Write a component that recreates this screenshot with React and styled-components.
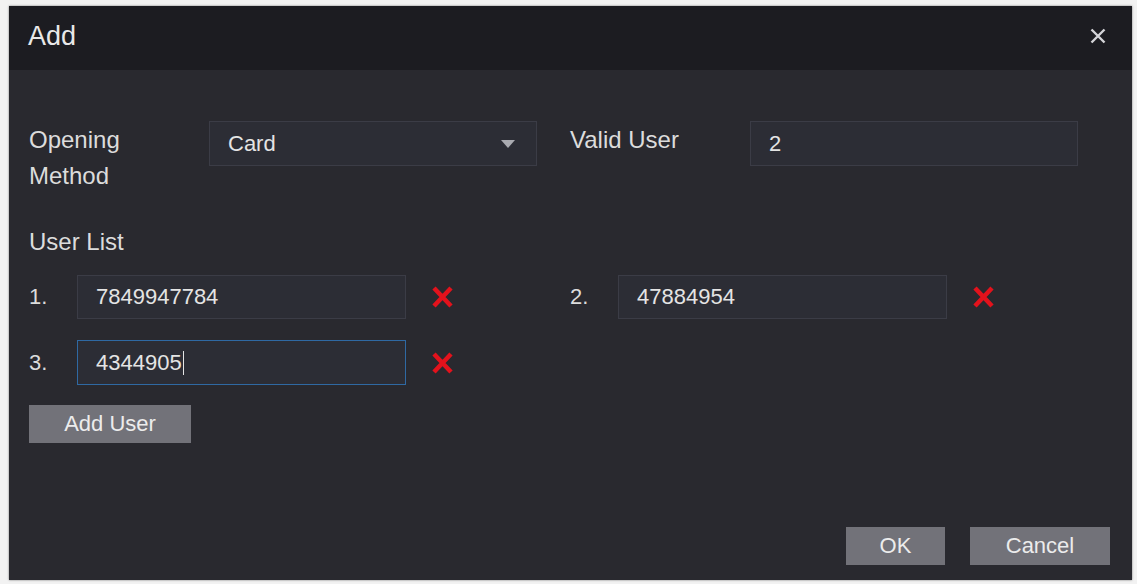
import styled, { createGlobalStyle } from "styled-components";

const GlobalStyle = createGlobalStyle`
  html, body {
    margin: 0;
    padding: 0;
    background: #f2f2f2;
  }
  body {
    font-family: "Liberation Sans", Arial, sans-serif;
  }
  * {
    box-sizing: border-box;
  }
`;

const Page = styled.div`
  width: 1137px;
  height: 584px;
  padding: 6px 5px 4px 9px;
`;

const Dialog = styled.div`
  width: 1123px;
  height: 574px;
  display: flex;
  flex-direction: column;
  background: #29292f;
  color: #dedede;
  box-shadow: 0 0 2px rgba(0, 0, 0, 0.5);
`;

const Header = styled.div`
  height: 64px;
  display: flex;
  align-items: center;
  justify-content: space-between;
  padding: 0 26px 3px 19px;
  background: #1c1c21;
`;

const Title = styled.div`
  font-size: 27px;
  color: #e8e8e8;
`;

const CloseButton = styled.div`
  width: 16px;
  height: 16px;
  margin-top: -2px;
  display: flex;
  cursor: pointer;
`;

const Body = styled.div`
  flex: 1;
  display: flex;
  flex-direction: column;
  padding: 51px 22px 15px 20px;
`;

const FormRow = styled.div`
  display: flex;
  gap: 33px;
`;

const FormGroup = styled.div`
  display: grid;
  grid-template-columns: 180px 328px;
  align-items: start;
`;

const Label = styled.div`
  font-size: 24px;
  line-height: 36px;
  padding-top: 1px;
  color: #dcdcdc;
`;

const Field = styled.div`
  height: ${(props) => (props.tall ? "45px" : "44px")};
  display: flex;
  align-items: center;
  position: relative;
  padding: 0 18px;
  font-size: 22px;
  color: #e4e4e4;
  background: #2c2d35;
  border: 1px solid ${(props) => (props.focused ? "#2f69a3" : "#3b3c46")};
`;

const Arrow = styled.span`
  position: absolute;
  right: 21px;
  top: 50%;
  margin-top: -4px;
  width: 0;
  height: 0;
  border-left: 7px solid transparent;
  border-right: 7px solid transparent;
  border-top: 8px solid #a9aab0;
`;

const Caret = styled.span`
  display: inline-block;
  width: 1px;
  height: 24px;
  margin-left: 1px;
  background: #e4e4e4;
`;

const SectionTitle = styled.div`
  margin-top: 36px;
  font-size: 24px;
  line-height: 24px;
  color: #dcdcdc;
`;

const UserGrid = styled.div`
  margin-top: 21px;
  display: grid;
  grid-template-columns: 541px 541px;
  row-gap: 21px;
`;

const UserCell = styled.div`
  display: flex;
  align-items: center;
`;

const UserIndex = styled.div`
  width: 48px;
  font-size: 22px;
  color: #dcdcdc;
`;

const UserField = styled(Field)`
  width: 329px;
`;

const RemoveButton = styled.div`
  width: 23px;
  height: 24px;
  margin-left: 25px;
  display: flex;
  cursor: pointer;
`;

const GrayButton = styled.div`
  width: ${(props) => props.w}px;
  height: 38px;
  display: flex;
  align-items: center;
  justify-content: center;
  font-size: 22px;
  color: #ececec;
  background: #727279;
  cursor: pointer;
`;

const AddRow = styled.div`
  margin-top: 20px;
  display: flex;
`;

const Footer = styled.div`
  margin-top: auto;
  display: flex;
  justify-content: flex-end;
  gap: 25px;
`;

function RedCross() {
  return (
    <svg width="23" height="24" viewBox="0 0 23 24">
      <path d="M3 3 L20 21 M20 3 L3 21" stroke="#e3121c" strokeWidth="4.5" strokeLinecap="butt" />
    </svg>
  );
}

const users = [
  { n: "1.", v: "7849947784" },
  { n: "2.", v: "47884954" },
  { n: "3.", v: "4344905", focused: true },
];

function App() {
  return (
    <>
      <GlobalStyle />
      <Page>
        <Dialog>
          <Header>
            <Title>Add</Title>
            <CloseButton>
              <svg width="16" height="16" viewBox="0 0 16 16">
                <path d="M1.5 1.5 L14.5 14.5 M14.5 1.5 L1.5 14.5" stroke="#d4d4d8" strokeWidth="2.4" />
              </svg>
            </CloseButton>
          </Header>
          <Body>
            <FormRow>
              <FormGroup>
                <Label>
                  Opening
                  <br />
                  Method
                </Label>
                <Field tall>
                  Card
                  <Arrow />
                </Field>
              </FormGroup>
              <FormGroup>
                <Label>Valid User</Label>
                <Field tall>2</Field>
              </FormGroup>
            </FormRow>
            <SectionTitle>User List</SectionTitle>
            <UserGrid>
              {users.map((u) => (
                <UserCell key={u.n}>
                  <UserIndex>{u.n}</UserIndex>
                  <UserField focused={u.focused ? 1 : 0} tall={u.focused ? 1 : 0}>
                    {u.v}
                    {u.focused && <Caret />}
                  </UserField>
                  <RemoveButton>
                    <RedCross />
                  </RemoveButton>
                </UserCell>
              ))}
            </UserGrid>
            <AddRow>
              <GrayButton w={162}>Add User</GrayButton>
            </AddRow>
            <Footer>
              <GrayButton w={99}>OK</GrayButton>
              <GrayButton w={140}>Cancel</GrayButton>
            </Footer>
          </Body>
        </Dialog>
      </Page>
    </>
  );
}

export default App;
